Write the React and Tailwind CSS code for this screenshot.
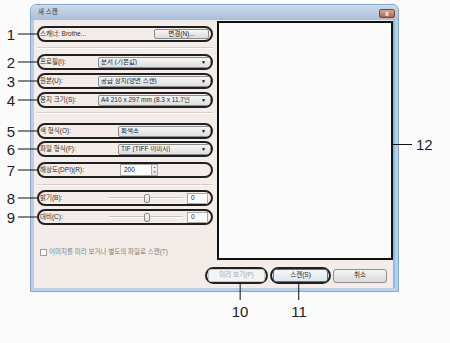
import React from 'react';

const Callout = ({ n }) => (
  <div className="absolute right-full top-1/2 -translate-y-1/2 flex items-center">
    <span className="w-[16px] text-right text-[15px] leading-none text-[#1e1e1e]">{n}</span>
    <span className="ml-[3px] w-[19px] h-px bg-[#111]" />
  </div>
);

const Row = ({ n, className = '', children }) => (
  <div className={`relative ml-[3px] w-[176px] h-[16px] ${className}`}>
    <Callout n={n} />
    <div className="h-full rounded-full border-2 border-[#1f1f1f] overflow-hidden flex items-center pl-[1px]">
      {children}
    </div>
  </div>
);

const Label = ({ children, w }) => (
  <span className={`text-[6.5px] leading-none text-[#2e2e2e] whitespace-nowrap ${w || ''}`}>{children}</span>
);

const Combo = ({ children, w }) => (
  <div className={`ml-auto h-[11px] ${w} flex items-center pl-[2px] pr-[4px] border border-[#8c8c8c] rounded-[2px] bg-gradient-to-b from-[#f6f6f6] to-[#dedede]`}>
    <span className="text-[6.5px] leading-none text-[#1e1e1e] whitespace-nowrap overflow-hidden">{children}</span>
    <span className="ml-auto text-[5px] leading-none text-black">▼</span>
  </div>
);

const Separator = ({ className }) => (
  <div className={`ml-[3px] w-[176px] ${className}`}>
    <div className="h-px bg-[#d6cdc9]" />
    <div className="h-px bg-white" />
  </div>
);

const Slider = () => (
  <>
    <div className="relative ml-auto w-[74px] h-[10px] flex items-center">
      <div className="w-full">
        <div className="h-px bg-[#c4c4c4]" />
        <div className="h-px bg-white" />
      </div>
      <div className="absolute left-[35px] top-[1px] w-[6px] h-[9px] rounded-[2px] border border-[#8a8a8a] bg-gradient-to-b from-[#fbfbfb] to-[#dcdcdc]" />
    </div>
    <div className="ml-[4px] mr-[3px] w-[21px] h-[11px] border border-[#a9a9a9] bg-white flex items-center pl-[3px]">
      <span className="text-[6.5px] leading-none text-[#222]">0</span>
    </div>
  </>
);

const BtnOval = ({ n, line, children }) => (
  <div className="relative h-[17px] rounded-full border-2 border-[#1f1f1f] px-[1px] flex items-center">
    {children}
    <div className={`absolute top-full ${line} flex flex-col items-center -translate-x-1/2`}>
      <span className="w-px h-[18px] bg-[#111]" />
      <span className="mt-[4px] text-[15px] leading-none text-[#1e1e1e]">{n}</span>
    </div>
  </div>
);

export default function App() {
  return (
    <div className="w-[450px] h-[343px] bg-[#fbfbfb] pt-[4px] pl-[30px] font-[family-name:Liberation_Sans,Noto_Sans_CJK_KR,sans-serif]">
      <div className="w-[369px] h-[288px] rounded-t-[6px] border border-[#86a6c2] bg-[#b8cfe7] flex flex-col">
        {/* title bar */}
        <div className="h-[15px] flex items-start rounded-t-[5px] bg-gradient-to-b from-[#cbdaec] to-[#a9bfd8]">
          <span className="mt-[4px] ml-[7px] text-[6.5px] leading-none text-[#333]">새 스캔</span>
          <div className="ml-auto mt-[4px] mr-[3px] w-[16px] h-[9px] rounded-[2px] border border-[#7d4232] bg-gradient-to-b from-[#d9a795] to-[#ad6650] flex items-center justify-center">
            <span className="text-[7px] leading-none font-bold text-white">x</span>
          </div>
        </div>

        {/* body */}
        <div className="flex-1 mx-[3px] mb-[3px] bg-[#f3ece8] border-r-2 border-r-[#7fbfe6] flex flex-col">
          <div className="flex pt-[1px]">
            {/* left column */}
            <div className="w-[184px] flex flex-col">
              <Row n="1" className="mt-[5px]">
                <Label>스캐너: Brothe...</Label>
                <div className="ml-auto mr-[2px] w-[55px] h-[10px] border border-[#8c8c8c] rounded-[2px] bg-gradient-to-b from-[#f6f6f6] to-[#dcdcdc] flex items-center justify-center">
                  <span className="text-[6.5px] leading-none text-[#222]">변경(N)...</span>
                </div>
              </Row>
              <Separator className="mt-[5px]" />
              <Row n="2" className="mt-[5px]">
                <Label>프로필(I):</Label>
                <Combo w="w-[113px]">문서 (기본값)</Combo>
              </Row>
              <Row n="3" className="mt-[3px]">
                <Label>원본(U):</Label>
                <Combo w="w-[113px]">공급 장치(양면 스캔)</Combo>
              </Row>
              <Row n="4" className="mt-[3px]">
                <Label>용지 크기(S):</Label>
                <Combo w="w-[113px]">A4 210 x 297 mm (8.3 x 11.7인</Combo>
              </Row>
              <Separator className="mt-[4px]" />
              <Row n="5" className="mt-[9px]">
                <Label>색 형식(O):</Label>
                <Combo w="w-[93px]">회색조</Combo>
              </Row>
              <Row n="6" className="mt-[2px]">
                <Label>파일 형식(F):</Label>
                <Combo w="w-[93px]">TIF (TIFF 이미지)</Combo>
              </Row>
              <Row n="7" className="mt-[5px]">
                <Label w="w-[80px]">해상도(DPI)(R):</Label>
                <div className="flex items-center h-[12px]">
                  <div className="w-[32px] h-full border border-[#a9a9a9] bg-white flex items-center pl-[3px]">
                    <span className="text-[6.5px] leading-none text-[#222]">200</span>
                  </div>
                  <div className="w-[6px] h-full flex flex-col border border-l-0 border-[#a9a9a9]">
                    <div className="flex-1 bg-[#eeeeee] flex items-center justify-center text-[3px] leading-none text-[#555]">▲</div>
                    <div className="flex-1 bg-[#e4e4e4] flex items-center justify-center text-[3px] leading-none text-[#555]">▼</div>
                  </div>
                </div>
              </Row>
              <Separator className="mt-[6px]" />
              <Row n="8" className="mt-[4px]">
                <Label>밝기(B):</Label>
                <Slider />
              </Row>
              <Row n="9" className="mt-[3px]">
                <Label>대비(C):</Label>
                <Slider />
              </Row>
              <div className="mt-[24px] ml-[6px] flex items-center gap-[2px]">
                <span className="w-[7px] h-[7px] border border-[#9c9c9c] bg-white" />
                <span className="text-[6.5px] leading-none text-[#7c7c7c] whitespace-nowrap">이미지를 미리 보거나 별도의 파일로 스캔(T)</span>
              </div>
            </div>

            {/* preview */}
            <div className="relative w-[177px] h-[239px] border-2 border-[#111] bg-[#fbfbfb]">
              <div className="absolute left-full top-[114px] flex items-center">
                <span className="w-[21px] h-px bg-[#111]" />
                <span className="ml-[4px] text-[15px] leading-none text-[#1e1e1e]">12</span>
              </div>
            </div>
          </div>

          {/* buttons */}
          <div className="mt-[7px] flex items-center justify-end gap-[2px] pr-[6px]">
            <BtnOval n="10" line="left-[33px]">
              <div className="w-[57px] h-[13px] border border-[#c8c8c8] rounded-[3px] bg-[#f4f4f4] flex items-center justify-center">
                <span className="text-[6.5px] leading-none text-[#a6a6a6]">미리 보기(P)</span>
              </div>
            </BtnOval>
            <BtnOval n="11" line="left-[27px]">
              <div className="w-[55px] h-[13px] border border-[#3d7bad] rounded-[3px] bg-gradient-to-b from-[#f3f7fa] to-[#dfe6ec] flex items-center justify-center">
                <span className="text-[6.5px] leading-none text-[#222]">스캔(S)</span>
              </div>
            </BtnOval>
            <div className="w-[54px] h-[14px] border border-[#8e8e8e] rounded-[3px] bg-gradient-to-b from-[#f4f4f4] to-[#dadada] flex items-center justify-center">
              <span className="text-[6.5px] leading-none text-[#222]">취소</span>
            </div>
          </div>
        </div>
      </div>
    </div>
  );
}
